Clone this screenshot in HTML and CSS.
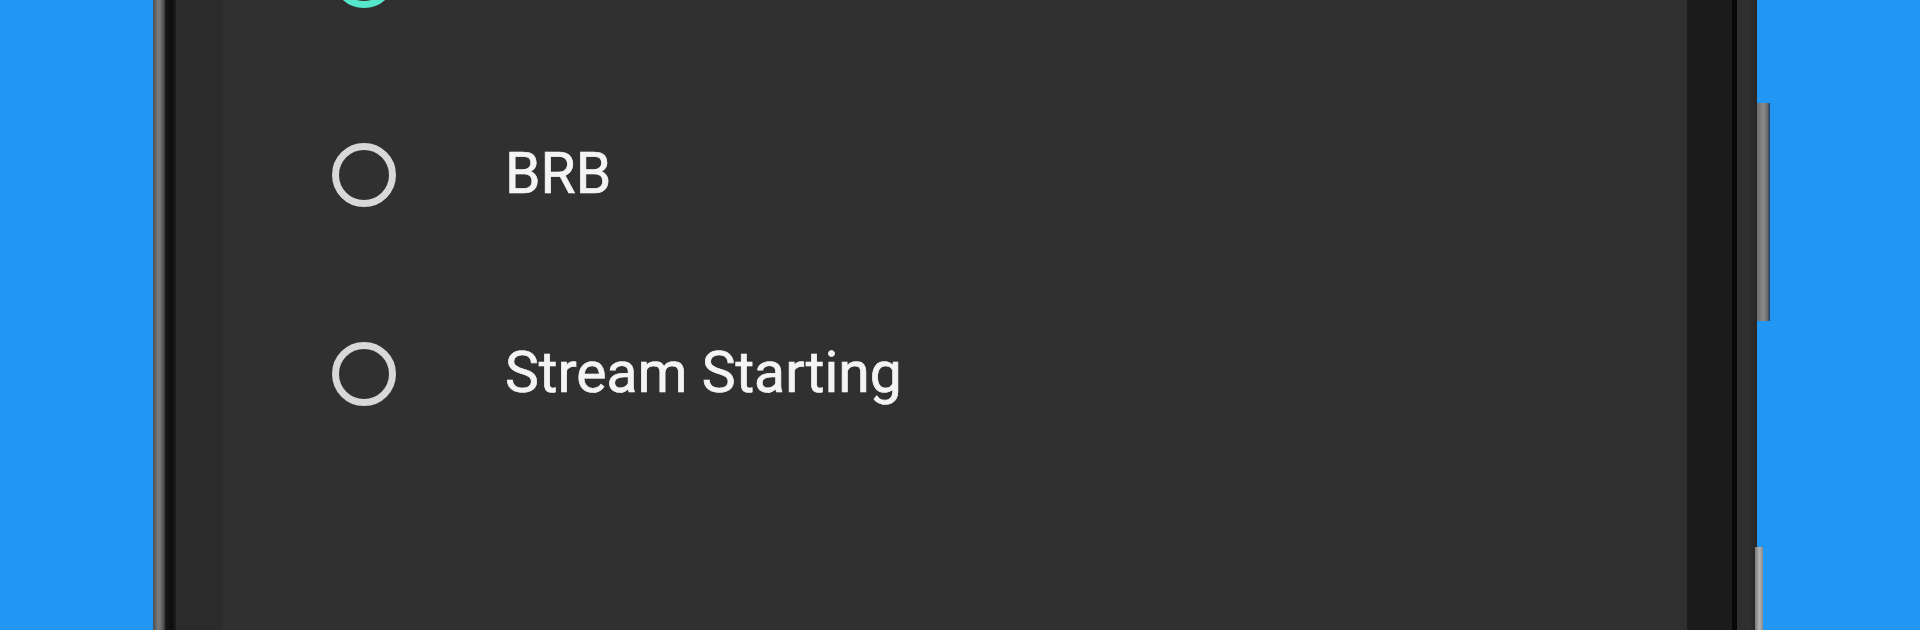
FILE: index.html
```html
<!DOCTYPE html>
<html lang="en">
<head>
    <meta charset="UTF-8">
    <title>Scenes</title>
    <link rel="stylesheet" href="styles.css">
</head>
<body>
<div class="device">
    <div class="edge-left"></div>
    <div class="rim-left"></div>
    <div class="frame-left"></div>
    <div class="screen">
        <ul class="choices">
            <li class="choice selected"><span class="radio"></span></li>
            <li class="choice"><span class="radio"></span><span class="label">BRB</span></li>
            <li class="choice"><span class="radio"></span><span class="label">Stream Starting</span></li>
        </ul>
    </div>
    <div class="frame-right"></div>
    <div class="rim-right"></div>
    <div class="edge-right"></div>
    <span class="key key-power"></span>
    <span class="key key-volume"></span>
</div>
</body>
</html>
```

FILE: styles.css
```css
*{
    margin: 0;
    padding: 0;
    box-sizing: border-box;
}
html,body{
    height: 630px;
    overflow: hidden;
}
body{
    background: #2196f3;
    font-family: Roboto, "Noto Sans", sans-serif;
}
li{
    list-style: none;
}
.device{
    position: relative;
    display: flex;
    width: 1604px;
    height: 630px;
    margin-left: 153px;
}
.edge-left{
    width: 12px;
    background: linear-gradient(to right, #4e4e4e, #7c7c7c 45%, #6a6a6a 70%, #3a3a3a);
}
.rim-left{
    width: 11px;
    background: linear-gradient(to right, #1a1a1a, #0c0c0c 60%, #1e1e1e);
}
.frame-left{
    width: 46px;
    background: #2b2b2b;
}
.screen{
    flex: 1;
    background: #303030;
    padding-left: 110px;
    overflow: hidden;
}
.frame-right{
    width: 45px;
    background: #1c1c1c;
}
.rim-right{
    width: 5px;
    background: #070707;
}
.edge-right{
    width: 20px;
    background: linear-gradient(to right, #2e2e2e, #303030 60%, #262626);
}
.choices{
    margin-top: -124px;
}
.choice{
    display: flex;
    align-items: center;
    height: 199px;
}
.radio{
    flex: none;
    width: 64px;
    height: 64px;
    border: 7px solid #d8d8d8;
    border-radius: 50%;
}
.choice.selected .radio{
    border-color: #56e6c9;
    background: radial-gradient(circle, #56e6c9 0 15px, transparent 16px);
}
.label{
    margin-left: 109px;
    color: #f4f4f4;
    font-size: 57px;
    line-height: 1.17;
    -webkit-text-stroke: 0.7px #f4f4f4;
}
.key{
    position: absolute;
    left: 100%;
}
.key-power{
    top: 103px;
    width: 13px;
    height: 218px;
    background: linear-gradient(to right, #6c6c6c, #8a8a8a 50%, #6a6a6a 80%, #123a60);
}
.key-volume{
    top: 547px;
    margin-left: -2px;
    width: 8px;
    height: 83px;
    background: linear-gradient(to right, #7a7a7a, #b4b4b4 55%, #8a8a8a);
}
```
